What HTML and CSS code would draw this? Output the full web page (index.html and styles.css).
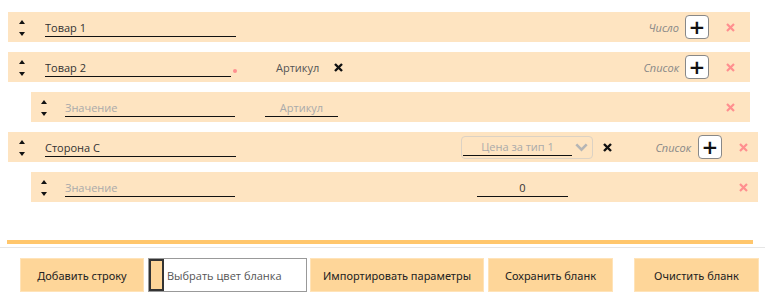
FILE: index.html
```html
<!DOCTYPE html>
<html lang="ru">
<head>
  <meta charset="UTF-8" />
  <title>Бланк</title>
  <link rel="stylesheet" href="styles.css">
</head>
<body>
  <div class="form">
    <div class="row">
      <div class="sort"><span class="up"></span><span class="down"></span></div>
      <input class="field name" type="text" value="Товар 1">
      <div class="tail">
        <span class="kind">Число</span>
        <button class="add">+</button>
        <svg class="del" width="9" height="9" viewBox="0 0 9 9"><path d="M1 1 L8 8 M8 1 L1 8"/></svg>
      </div>
    </div>

    <div class="row">
      <div class="sort"><span class="up"></span><span class="down"></span></div>
      <input class="field name short" type="text" value="Товар 2">
      <span class="req"></span>
      <span class="col-name">Артикул</span>
      <svg class="col-del" width="9" height="9" viewBox="0 0 9 9"><path d="M1 1 L8 8 M8 1 L1 8"/></svg>
      <div class="tail">
        <span class="kind">Список</span>
        <button class="add">+</button>
        <svg class="del" width="9" height="9" viewBox="0 0 9 9"><path d="M1 1 L8 8 M8 1 L1 8"/></svg>
      </div>
    </div>

    <div class="row sub">
      <div class="sort"><span class="up"></span><span class="down"></span></div>
      <input class="field name" type="text" placeholder="Значение">
      <input class="field art" type="text" placeholder="Артикул">
      <div class="tail">
        <svg class="del" width="9" height="9" viewBox="0 0 9 9"><path d="M1 1 L8 8 M8 1 L1 8"/></svg>
      </div>
    </div>

    <div class="row wide">
      <div class="sort"><span class="up"></span><span class="down"></span></div>
      <input class="field name" type="text" value="Сторона С">
      <div class="picker">
        <input class="field price" type="text" placeholder="Цена за тип 1">
        <svg class="chev" width="15" height="10" viewBox="0 0 15 10"><path d="M1.5 2 L7.5 8 L13.5 2" fill="none" stroke="#b5b5b5" stroke-width="3"/></svg>
      </div>
      <svg class="col-del" width="9" height="9" viewBox="0 0 9 9"><path d="M1 1 L8 8 M8 1 L1 8"/></svg>
      <div class="tail">
        <span class="kind">Список</span>
        <button class="add">+</button>
        <svg class="del" width="9" height="9" viewBox="0 0 9 9"><path d="M1 1 L8 8 M8 1 L1 8"/></svg>
      </div>
    </div>

    <div class="row sub wide">
      <div class="sort"><span class="up"></span><span class="down"></span></div>
      <input class="field name" type="text" placeholder="Значение">
      <input class="field num" type="text" value="0">
      <div class="tail">
        <svg class="del" width="9" height="9" viewBox="0 0 9 9"><path d="M1 1 L8 8 M8 1 L1 8"/></svg>
      </div>
    </div>

    <div class="bar"></div>
  </div>

  <div class="toolbar">
    <button class="btn b-add">Добавить строку</button>
    <label class="color"><span class="swatch"></span>Выбрать цвет бланка</label>
    <button class="btn b-import">Импортировать параметры</button>
    <button class="btn b-save">Сохранить бланк</button>
    <button class="btn b-clear">Очистить бланк</button>
  </div>
</body>
</html>
```

FILE: styles.css
```css
body {
  margin: 0;
  font-family: "Open Sans", "Noto Sans", sans-serif;
  font-size: 11px;
  color: #333;
  background: #fff;
}
.form {
  padding: 12px 0 0 8px;
  border-bottom: 1px solid #e6e6e6;
  margin-right: 2px;
}
.row {
  display: flex;
  align-items: center;
  width: 742px;
  height: 30px;
  margin-bottom: 10px;
  background: #fee4c1;
  box-sizing: border-box;
  padding-left: 11px;
}
.row.wide {
  width: 750px;
}
.row.sub {
  margin-left: 23px;
  width: 719px;
  padding-left: 10px;
}
.row.sub.wide {
  width: 727px;
}
.sort {
  display: flex;
  flex-direction: column;
  align-items: center;
  gap: 8px;
  width: 5px;
  margin-top: 2px;
}
.up, .down {
  width: 0;
  height: 0;
  border-left: 3px solid transparent;
  border-right: 3px solid transparent;
}
.up { border-bottom: 4px solid #111; }
.down { border-top: 4px solid #111; }
.field {
  font-family: inherit;
  font-size: 11px;
  color: #333;
  background: transparent;
  border: none;
  border-bottom: 1px solid #111;
  outline: none;
  padding: 0;
  height: 16px;
  margin-top: 2px;
}
.field::placeholder {
  color: #aaa;
}
.name {
  width: 191px;
  margin-left: 21px;
}
.name.short {
  width: 186px;
}
.row.sub .name {
  width: 170px;
  margin-left: 19px;
}
.req {
  width: 4px;
  height: 4px;
  border-radius: 50%;
  background: #ff8f8f;
  margin: 8px 0 0 2px;
}
.col-name {
  margin-left: 39px;
  color: #555;
}
.col-del {
  stroke: #111;
  stroke-width: 2.4;
  margin-left: 15px;
}
.art {
  width: 73px;
  margin-left: 30px;
  text-align: center;
}
.num {
  width: 91px;
  margin-left: 242px;
  text-align: center;
}
.picker {
  display: flex;
  align-items: center;
  margin-left: 225px;
  width: 132px;
  height: 23px;
  box-sizing: border-box;
  border: 1px solid #dcd2c4;
  border-radius: 4px;
  padding: 0 4px 0 1px;
}
.price {
  width: 109px;
  text-align: center;
  margin-top: 0;
}
.chev {
  margin-left: 3px;
}
.picker + .col-del {
  margin-left: 10px;
}
.tail {
  margin-left: auto;
  display: flex;
  align-items: center;
}
.kind {
  font-style: italic;
  color: #888;
  margin-right: 6px;
}
.add {
  width: 24px;
  height: 24px;
  padding: 0;
  background: #fff;
  border: 1px solid #888;
  border-radius: 4px;
  font-family: "DejaVu Sans", sans-serif;
  font-size: 20px;
  font-weight: bold;
  line-height: 20px;
  color: #111;
}
.del {
  stroke: #ff8f8f;
  stroke-width: 2.2;
  margin: 0 15px 0 17px;
}
.row.wide .add {
  margin-left: 1px;
}
.row.wide .del {
  margin-right: 10px;
  margin-left: 17px;
}
.bar {
  height: 4px;
  width: 746px;
  margin: 38px 0 3px -1px;
  background: #ffc66c;
}
.toolbar {
  display: flex;
  gap: 4px;
  padding: 10px 8px 0 20px;
}
.btn {
  height: 34px;
  border: 1px solid #ffe3b8;
  background: #fed699;
  font-family: "Noto Sans", "Open Sans", sans-serif;
  font-size: 11px;
  color: #222;
  padding: 0;
}
.b-add { width: 124px; }
.b-import { width: 174px; margin-left: -1px; }
.b-save { width: 125px; }
.b-clear { width: 125px; margin-left: auto; }
.color {
  display: flex;
  align-items: center;
  width: 159px;
  height: 34px;
  box-sizing: border-box;
  border: 1px solid #999;
  color: #555;
}
.swatch {
  width: 15px;
  height: 32px;
  box-sizing: border-box;
  border: 2px solid #333;
  background: #fed699;
  margin-right: 3px;
}
```
